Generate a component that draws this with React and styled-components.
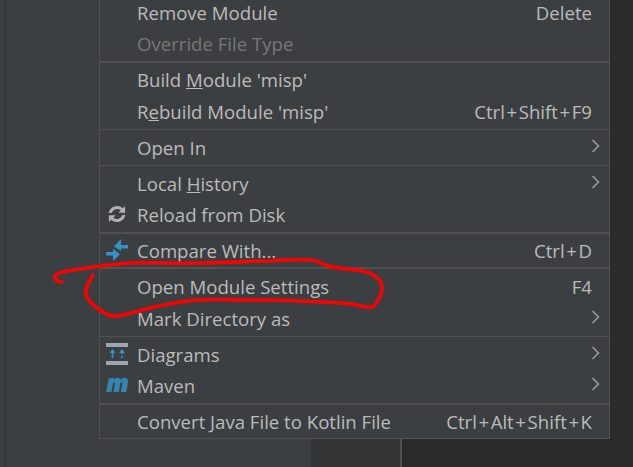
import React from 'react'
import styled, { createGlobalStyle } from 'styled-components'

const Global = createGlobalStyle`
html, body { margin: 0; padding: 0; background: #3c3f41; }
`;

const Screen = styled.div`
position: relative;
display: flex;
width: 633px;
height: 467px;
overflow: hidden;
background: #3c3f41;
font-family: "Open Sans", "Noto Sans", sans-serif;
`;
const Gutter = styled.div`
width: 5px;
flex: none;
border-right: 1px solid #323232;
`;
const SidePanel = styled.div`
width: 305px;
flex: none;
`;
const BottomTool = styled.div`
width: 89px;
flex: none;
background: #313335;
border-right: 2px solid #515151;
`;
const Editor = styled.div`
flex: 1;
background: #2b2b2b;
`;
const Menu = styled.div`
position: absolute;
left: 99px;
top: -4px;
width: 511px;
height: 443px;
box-sizing: border-box;
padding-bottom: 1px;
background: #3c3f41;
border: 1px solid #515151;
border-top: none;
display: flex;
flex-direction: column;
`;
const Row = styled.div`
height: ${({$h}) => $h || 32}px;
flex: none;
display: flex;
align-items: center;
color: ${({$disabled}) => $disabled ? '#777777' : '#bbbbbb'};
font-size: 18.6px;
white-space: nowrap;
`;
const IconSlot = styled.div`
width: 34px;
padding-right: 3px;
flex: none;
display: flex;
justify-content: center;
align-items: center;
`;
const Label = styled.span`
flex: 1;
`;
const Mnemonic = styled.span`
text-decoration: underline;
`;
const Shortcut = styled.span`
margin-right: 17px;
`;
const Plus = styled.span`
margin: 0 1.6px;
`;
const ArrowSlot = styled.div`
width: 28px;
flex: none;
display: flex;
justify-content: center;
margin-bottom: 3px;
`;
const Separator = styled.div`
height: ${({$thick}) => $thick ? 2 : 1}px;
flex: none;
background: #515151;
margin: ${({$m}) => $m};
`;
const Scribble = styled.svg`
position: absolute;
left: 0;
top: 0;
pointer-events: none;
`;

const Arrow = () => (
  <svg width="9" height="14" viewBox="0 0 9 14">
    <path d="M1.5 1 L7.5 7 L1.5 13" fill="none" stroke="#9a9a9a" strokeWidth="1.6" />
  </svg>
)

const ReloadIcon = () => (
  <svg width="18" height="18" viewBox="0 0 20 20">
    <path d="M4 9 A6.5 6.5 0 0 1 14.2 5.8 L11.5 8.5 H19 V1 L16.5 3.5 A9.5 9.5 0 0 0 0.8 9 Z" fill="#afb1b3" />
    <path d="M16 11 A6.5 6.5 0 0 1 5.8 14.2 L8.5 11.5 H1 V19 L3.5 16.5 A9.5 9.5 0 0 0 19.2 11 Z" fill="#afb1b3" />
  </svg>
)

const CompareIcon = () => (
  <svg width="22" height="22" viewBox="0 0 22 22">
    <path d="M22 6 H15 V0 L8 7.5 L15 12 V9.5 H22 Z" fill="#3592c4" />
    <path d="M0 13 H7 V9.5 L14 15.5 L7 22 V16.5 H0 Z" fill="#3592c4" />
  </svg>
)

const DiagramIcon = () => (
  <svg width="22" height="22" viewBox="0 0 22 22">
    <rect x="0" y="0" width="22" height="4" fill="#9aa7b0" />
    <rect x="0" y="18" width="22" height="4" fill="#9aa7b0" />
    <path d="M6.5 6 L9.5 10 H7.3 V15 H5.7 V10 H3.5 Z" fill="#3592c4" />
    <path d="M16 6 L19 10 H16.8 V11.5 H15.2 V10 H13 Z" fill="#3592c4" />
    <rect x="15.2" y="13" width="1.6" height="2" fill="#3592c4" />
  </svg>
)

const MavenIcon = () => (
  <svg width="23" height="16" viewBox="0 0 24 17">
    <path d="M2.8 1 H8.4 L8 3 C9.8 0.4 13.6 0 15 2.8 C17 0 23.4 -0.6 23.2 5 L21.3 16 H15.6 L17.2 6.6 C17.5 5 15.6 5 15 7 L13.4 16 H7.7 L9.3 6.6 C9.6 5 7.7 5 7.1 7 L5.5 16 H0 Z" fill="#3592c4" opacity="0.85" />
  </svg>
)

function keys(shortcut) {
  return shortcut.split('+').map((key, i) => (
    <React.Fragment key={key}>
      {i > 0 && <Plus>+</Plus>}
      {key}
    </React.Fragment>
  ))
}

function Item({ icon, label, shortcut, submenu, disabled, h }) {
  return (
    <Row $disabled={disabled} $h={h}>
      <IconSlot>{icon}</IconSlot>
      <Label>{label}</Label>
      {shortcut && <Shortcut>{keys(shortcut)}</Shortcut>}
      {submenu && <ArrowSlot><Arrow /></ArrowSlot>}
    </Row>
  )
}

export default function App() {
  return (
    <Screen>
      <Global />
      <Gutter />
      <SidePanel />
      <BottomTool />
      <Editor />
      <Menu>
        <Item label="Remove Module" shortcut="Delete" />
        <Item label="Override File Type" disabled h={30} />
        <Separator $thick $m="3px 0 0" />
        <Item label={<>Build <Mnemonic>M</Mnemonic>odule 'misp'</>} />
        <Item label={<>R<Mnemonic>e</Mnemonic>build Module 'misp'</>} shortcut="Ctrl+Shift+F9" />
        <Separator $m="2px 0 1px" />
        <Item label="Open In" submenu />
        <Separator $m="2px 0 2px" />
        <Item label={<>Local <Mnemonic>H</Mnemonic>istory</>} submenu h={30} />
        <Item icon={<ReloadIcon />} label="Reload from Disk" />
        <Separator $thick $m="2px 0 0" />
        <Item icon={<CompareIcon />} label="Compare With..." shortcut="Ctrl+D" />
        <Separator $thick $m="1px 0 1px" />
        <Item label="Open Module Settings" shortcut="F4" />
        <Item label="Mark Directory as" submenu />
        <Separator $m="2px 0 2px" />
        <Item icon={<DiagramIcon />} label="Diagrams" submenu h={30} />
        <Item icon={<MavenIcon />} label="Maven" submenu />
        <Separator $thick $m="2px 0 0" />
        <Item label="Convert Java File to Kotlin File" shortcut="Ctrl+Alt+Shift+K" />
      </Menu>
      <Scribble width="633" height="467" viewBox="0 0 633 467">
        <path d="M62 282 C58 282 54 280 55 276 C56 273 62 272 67 271 C85 268 110 264 133 263 C155 262 175 264 200 263 C225 263 250 261 267 261 C285 260 300 259 310 260 C316 260 318 262 323 264 C330 267 338 268 347 269 C358 270 365 271 370 273 C378 277 382 281 382 287 C382 293 380 298 377 302 C375 305 374 307 372 307 C365 308 358 305 350 304 C335 302 318 302 300 301 C283 300 267 300 250 300 C228 300 205 298 187 301 C175 303 162 305 150 308 C137 311 125 316 113 316 C108 316 104 313 100 310 C94 306 89 302 87 297 C85 294 86 290 87 287 C88 282 91 279 93 275" fill="none" stroke="#ff0000" strokeWidth="3.6" strokeLinecap="round" strokeLinejoin="round" />
      </Scribble>
    </Screen>
  )
}
